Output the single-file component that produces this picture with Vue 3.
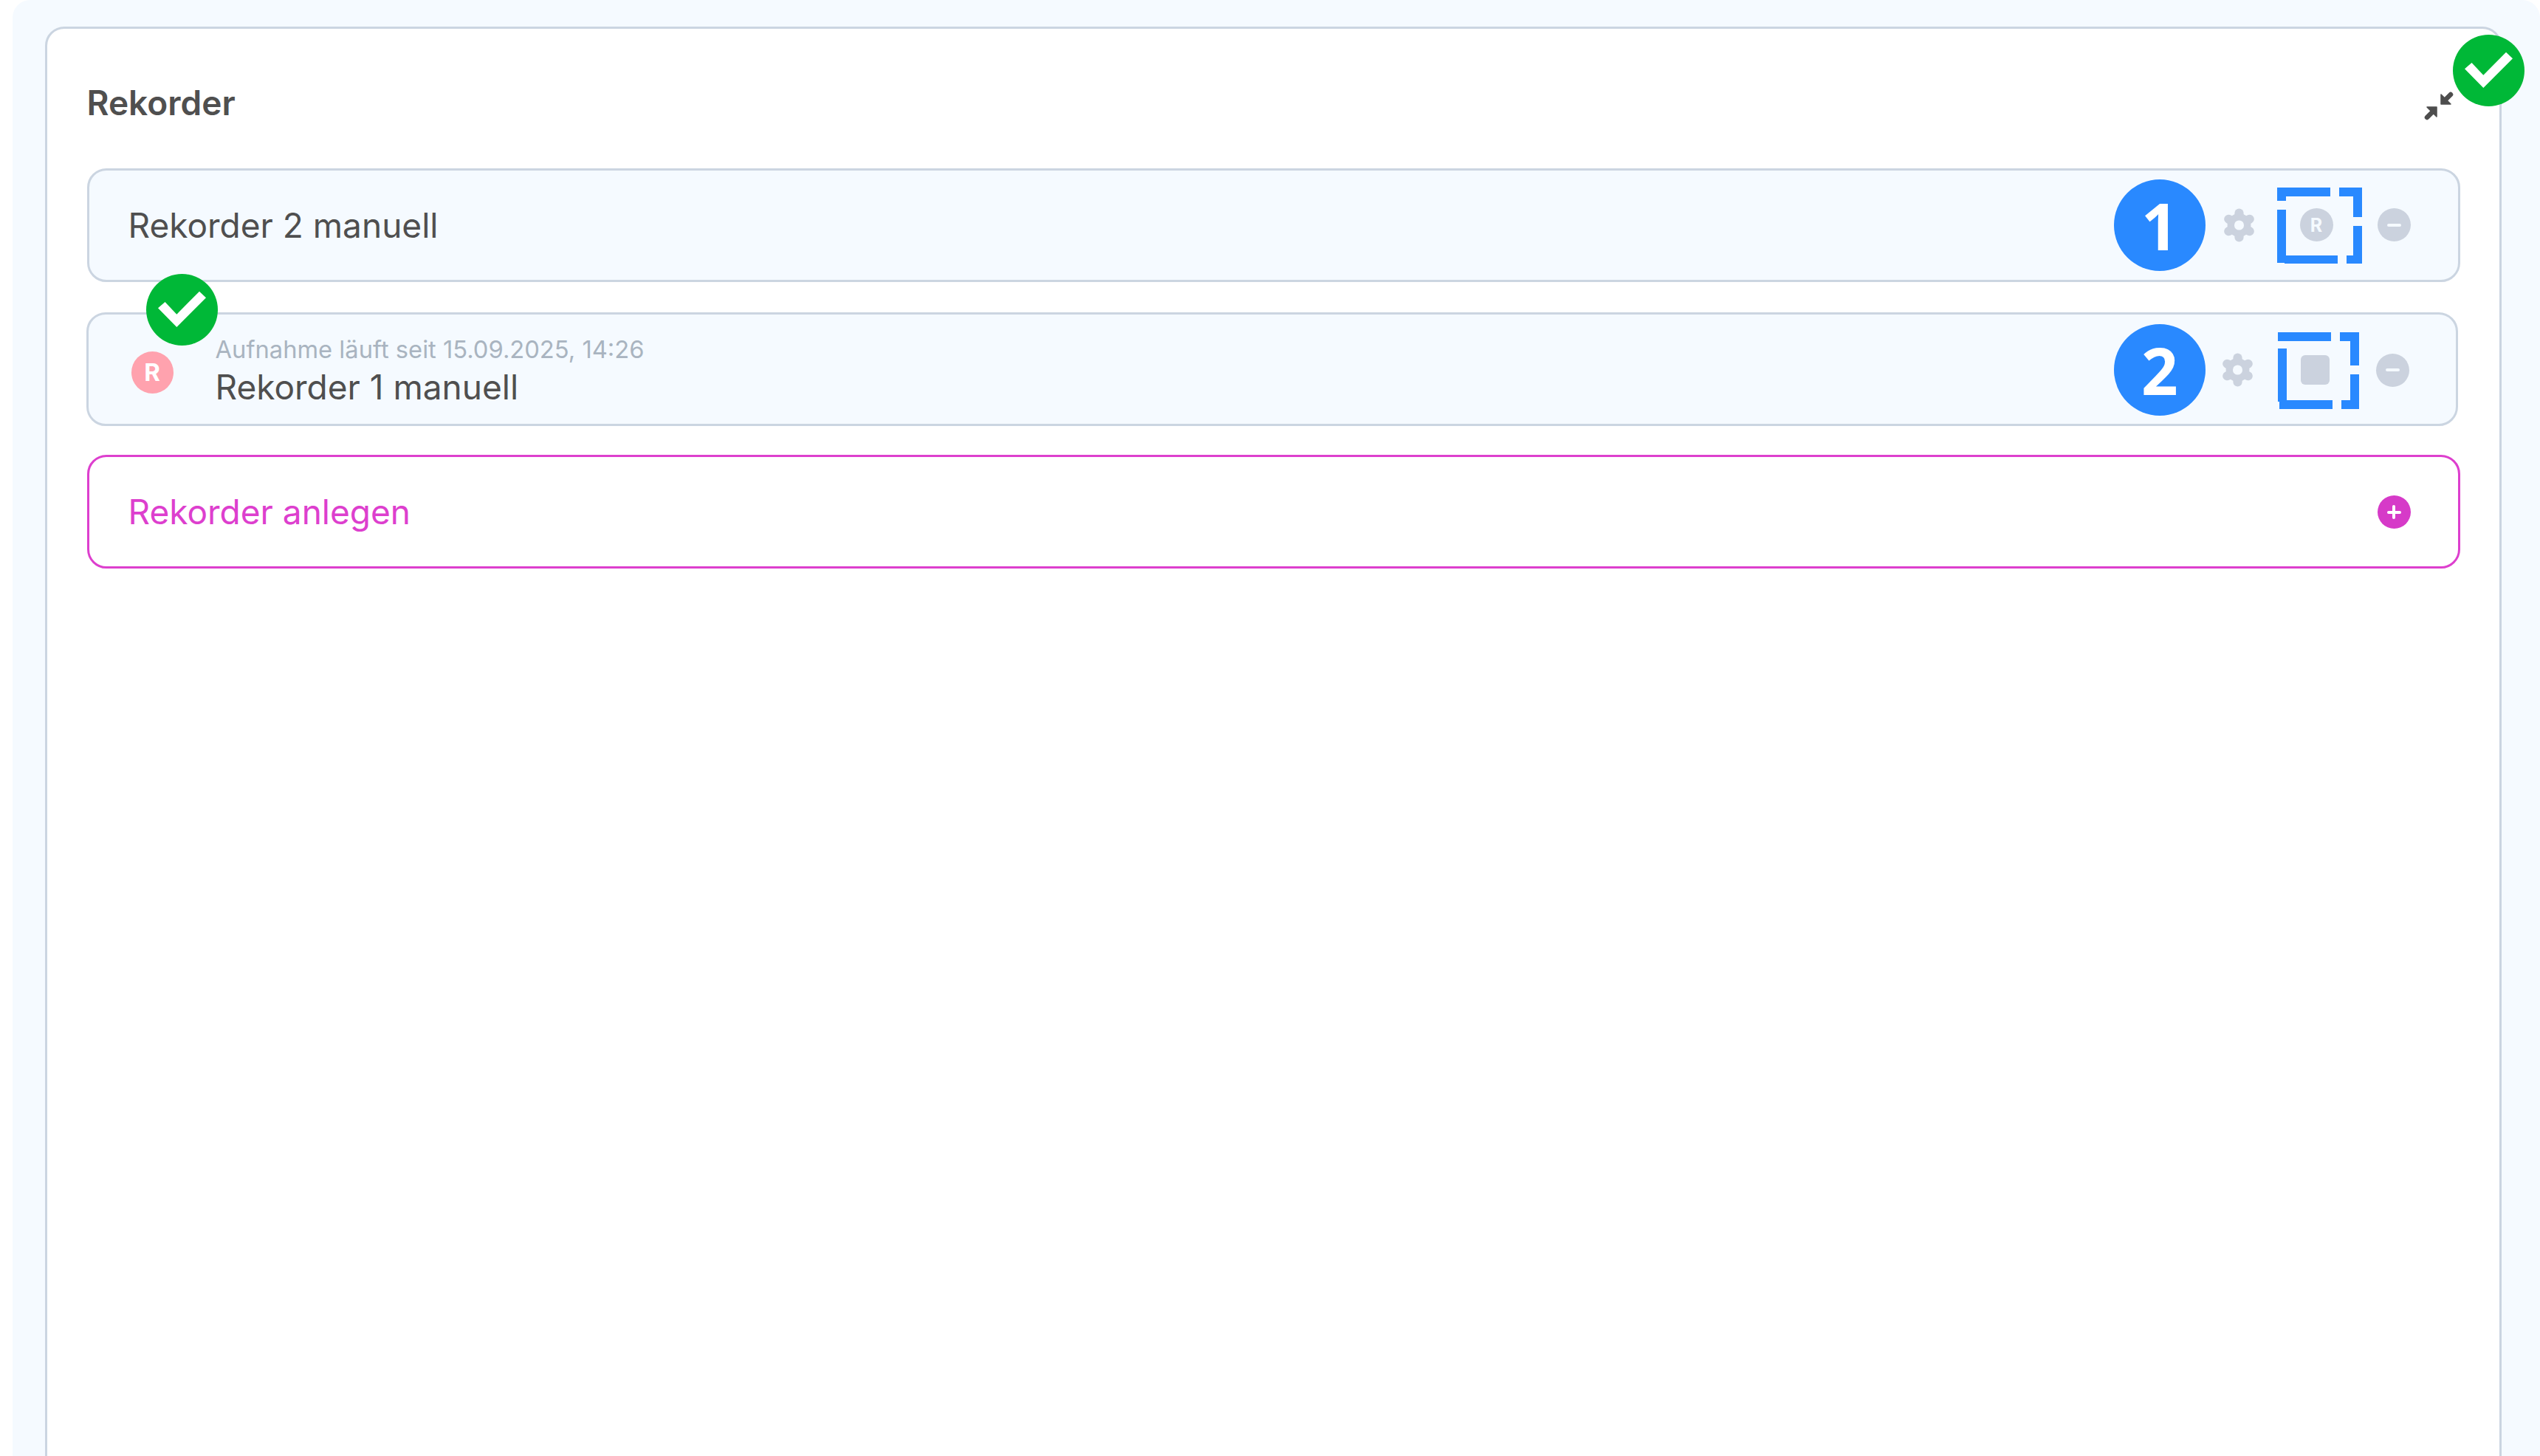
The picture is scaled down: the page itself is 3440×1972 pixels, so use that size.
<script setup>
const recorders = [
  {
    id: 2,
    name: 'Rekorder 2 manuell',
    number: 1,
    recording: false,
    frame: { w: 115, h: 103, rects: [[0,0,72,12],[0,0,12,18],[84,0,31,12],[103,0,12,40],[103,52,12,51],[94,92,21,11],[10,92,72,11],[0,30,12,72]] },
  },
  {
    id: 1,
    name: 'Rekorder 1 manuell',
    since: 'Aufnahme läuft seit 15.09.2025, 14:26',
    number: 2,
    recording: true,
    frame: { w: 110, h: 104, rects: [[0,0,72,12],[84,0,26,12],[98,0,12,45],[98,57,12,47],[2,92,72,12],[86,92,24,12],[0,22,12,72]] },
  },
]
const checkPoints = '16,46.3 25.5,38 41.3,54.7 72,23.7 81,32.3 41.3,72'
</script>

<template>
  <div class="page">
    <main class="panel">
      <section class="card">
        <span class="check check-card">
          <svg viewBox="0 0 97 97"><polygon :points="checkPoints" /></svg>
        </span>
        <header class="card-head">
          <h2 class="title">Rekorder</h2>
          <svg class="compress" viewBox="0 0 40 40">
            <polygon points="23,5 23,18 36,18" />
            <line x1="29" y1="12" x2="36" y2="5" />
            <polygon points="4,22 17,22 17,35" />
            <line x1="11" y1="29" x2="4" y2="36" />
          </svg>
        </header>

        <div class="list">
          <article
            v-for="rec in recorders"
            :key="rec.id"
            class="row"
            :class="{ 'row-running': rec.recording }"
          >
            <template v-if="rec.recording">
              <span class="check check-row">
                <svg viewBox="0 0 97 97"><polygon :points="checkPoints" /></svg>
              </span>
              <span class="live-dot">R</span>
            </template>
            <div class="info">
              <div v-if="rec.since" class="since">{{ rec.since }}</div>
              <div class="name">{{ rec.name }}</div>
            </div>
            <div class="actions">
              <span class="step">{{ rec.number }}</span>
              <svg class="gear" viewBox="0 0 48 48">
                <circle cx="24" cy="24" r="17" />
                <line x1="24" y1="6.5" x2="24" y2="41.5" />
                <line x1="8.84" y1="15.25" x2="39.16" y2="32.75" />
                <line x1="8.84" y1="32.75" x2="39.16" y2="15.25" />
                <circle class="gear-hole" cx="24" cy="24" r="7" />
              </svg>
              <span class="slot">
                <span v-if="rec.recording" class="stop"></span>
                <span v-else class="round">R</span>
                <svg class="frame" :width="rec.frame.w" :height="rec.frame.h">
                  <rect
                    v-for="(r, i) in rec.frame.rects"
                    :key="i"
                    :x="r[0]"
                    :y="r[1]"
                    :width="r[2]"
                    :height="r[3]"
                  />
                </svg>
              </span>
              <span class="round"><span class="minus"></span></span>
            </div>
          </article>

          <button class="row row-add" type="button">
            <span class="add-label">Rekorder anlegen</span>
            <span class="round round-add"><span class="plus"></span></span>
          </button>
        </div>
      </section>
    </main>
  </div>
</template>

<style>
html, body { margin: 0; background: #fff; }
</style>

<style scoped>
.page {
  width: 3440px;
  height: 1972px;
  overflow: hidden;
  padding-left: 17px;
  box-sizing: border-box;
  font-family: Inter, "Liberation Sans", sans-serif;
  color: #4f4f4f;
}
.panel {
  height: 2100px;
  box-sizing: border-box;
  padding: 36px 52px 0 44px;
  background: #f5faff;
  border-radius: 24px;
}
.card {
  position: relative;
  height: 2000px;
  box-sizing: border-box;
  padding: 0 53px 0 53.5px;
  background: #fff;
  border: 3.5px solid #cbd5e1;
  border-radius: 26px;
}
.card-head {
  height: 188.5px;
  padding-top: 11px;
  display: flex;
  align-items: center;
  justify-content: space-between;
  box-sizing: border-box;
}
.title {
  margin: 0;
  font-size: 46px;
  font-weight: 600;
  line-height: 56px;
}
.compress {
  width: 40px;
  height: 40px;
  margin: 7.5px 9px 0 0;
  fill: #4d4d4d;
  stroke: #4d4d4d;
}
.compress polygon { stroke-width: 1.5; stroke-linejoin: round; }
.compress line { stroke-width: 6.5; stroke-linecap: round; }
.check {
  position: absolute;
  width: 97px;
  height: 97px;
  border-radius: 50%;
  background: #00b837;
  z-index: 2;
}
.check svg { display: block; width: 100%; height: 100%; fill: #fff; }
.check-card { right: -34px; top: 7.5px; }
.check-row { left: 78.5px; top: -55px; }

.list { display: flex; flex-direction: column; }
.row {
  position: relative;
  height: 154px;
  box-sizing: border-box;
  display: flex;
  align-items: center;
  padding: 0 64.5px 0 53px;
  background: #f5faff;
  border: 3.5px solid #cbd5e1;
  border-radius: 26px;
}
.row-running {
  margin: 41px 3px 39px -1px;
  padding: 0 63px 0 58px;
}
.row-add {
  width: 100%;
  font: inherit;
  background: #fff;
  border-color: #dd3fce;
  justify-content: space-between;
  margin: 0;
}
.info { flex: 1; min-width: 0; }
.row-running .info { padding-top: 2px; }
.name {
  font-size: 46px;
  line-height: 56px;
}
.since {
  font-size: 32.7px;
  line-height: 46px;
  color: #a9b4c0;
}
.add-label { font-size: 46px; line-height: 56px; color: #dd3fce; }
.live-dot {
  width: 57px;
  height: 57px;
  flex: none;
  margin: 9px 57px 0 0;
  border-radius: 50%;
  background: #ffa2ae;
  color: #fff;
  font-size: 33px;
  font-weight: 700;
  display: flex;
  align-items: center;
  justify-content: center;
}
.actions {
  display: flex;
  align-items: center;
  gap: 60px;
}
.row-running .actions { margin-top: 3px; }
.step {
  position: absolute;
  right: 342px;
  top: 12.5px;
  width: 124px;
  height: 124px;
  border-radius: 50%;
  background: #2989ff;
  color: #fff;
  font-family: "Noto Sans", sans-serif;
  font-size: 87px;
  font-weight: 700;
  line-height: 124px;
  text-align: center;
}
.row-running .step { right: 339px; top: 13.5px; }
.gear {
  width: 45px;
  height: 48px;
  flex: none;
  fill: #cbd2de;
  stroke: #cbd2de;
}
.gear > circle { stroke: none; }
.gear line { stroke-width: 13; stroke-linecap: round; }
.gear .gear-hole { fill: #f5faff; }
.slot {
  position: relative;
  width: 45px;
  height: 45px;
  flex: none;
  display: flex;
  align-items: center;
  justify-content: center;
}
.round {
  width: 45px;
  height: 45px;
  flex: none;
  border-radius: 50%;
  background: #cbd2de;
  color: #f5faff;
  font-size: 25px;
  font-weight: 700;
  display: flex;
  align-items: center;
  justify-content: center;
}
.round-add { background: #d63ac8; margin-top: 2px; }
.minus {
  width: 19px;
  height: 4px;
  border-radius: 2px;
  background: #f5faff;
}
.plus {
  position: relative;
  width: 19px;
  height: 4px;
  border-radius: 2px;
  background: #fff;
}
.plus::after {
  content: "";
  position: absolute;
  left: 7.5px;
  top: -7.5px;
  width: 4px;
  height: 19px;
  border-radius: 2px;
  background: #fff;
}
.stop {
  width: 39px;
  height: 40px;
  border-radius: 6px;
  background: #cbd2de;
}
.frame {
  position: absolute;
  left: -31px;
  top: -28px;
  fill: #2989ff;
}
.row-running .frame { left: -28px; top: -29px; }
</style>
